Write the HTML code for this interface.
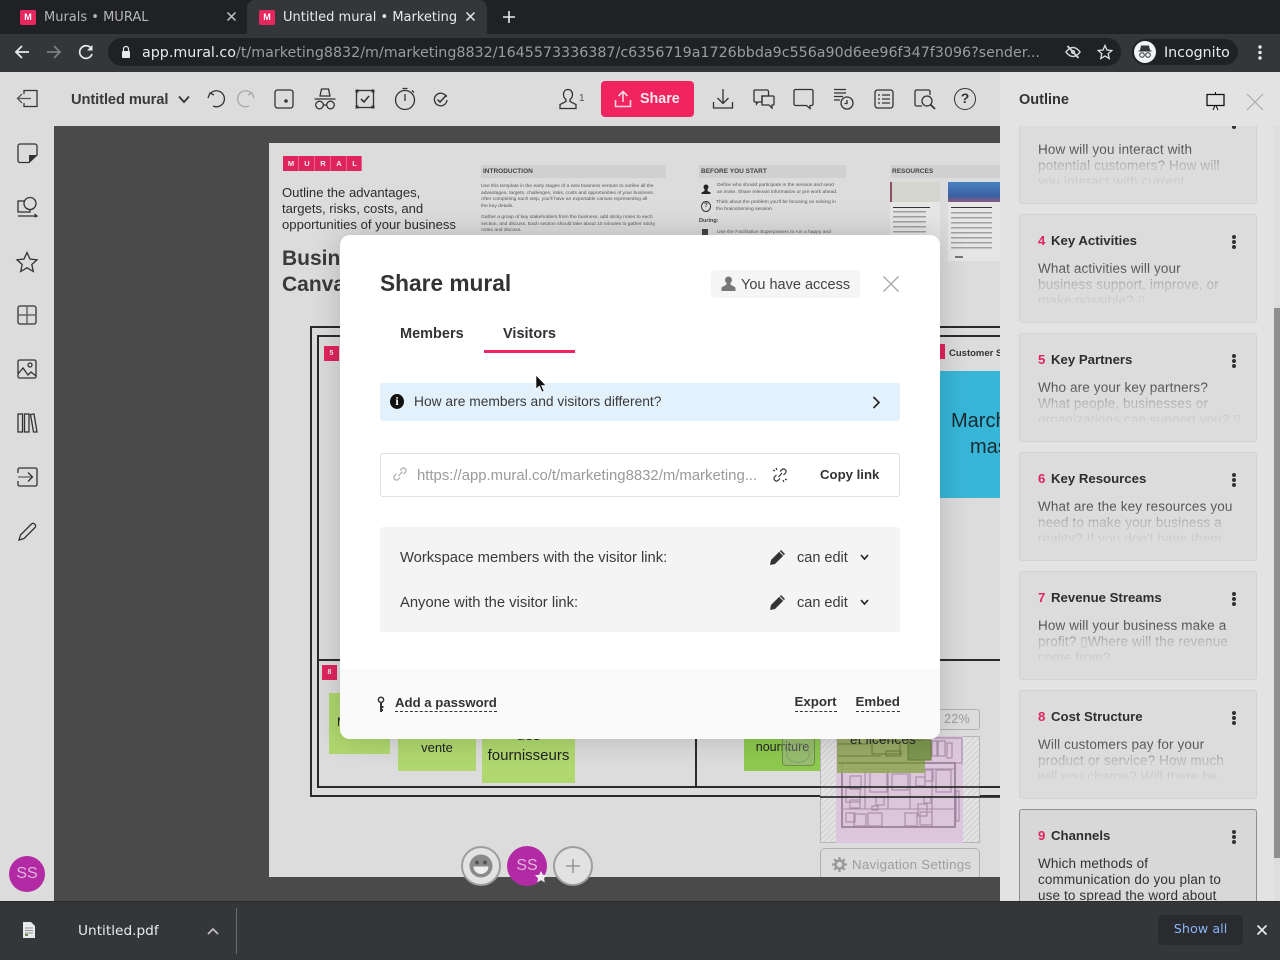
<!DOCTYPE html>
<html><head><meta charset="utf-8"><title>Untitled mural</title>
<style>
html,body{margin:0;padding:0;width:1280px;height:960px;overflow:hidden;background:#4a4a4a;font-family:"Liberation Sans",sans-serif;color:#333}
.a{position:absolute;white-space:nowrap}
svg{position:absolute;overflow:visible;fill:none}
.dj{font-family:"DejaVu Sans",sans-serif}
.card{position:absolute;left:1019px;width:236px;height:107px;background:#dcdcdc;border:1px solid #d2d2d2;border-radius:3px;overflow:hidden}
.card .n{position:absolute;left:18px;top:17px;font:bold 13.2px/18px "Liberation Sans",sans-serif;color:#e0245e}
.card .t{position:absolute;left:31px;top:17px;font:bold 13.2px/18px "Liberation Sans",sans-serif;color:#2e2e2e;white-space:nowrap}
.card .d{position:absolute;left:18px;top:46px;width:215px;height:42px;overflow:hidden;white-space:nowrap;font:13.5px/16px "Liberation Sans",sans-serif;color:#555;letter-spacing:.13px}
.card .f{position:absolute;left:0;right:0;top:46px;height:42px;background:linear-gradient(#dcdcdc00 0,#dcdcdc00 8px,#dcdcdcc0 24px,#dcdcdce8 42px)}
.card i{position:absolute;left:212px;width:3.6px;height:3.6px;border-radius:2px;background:#333}
.sticky{position:absolute;background:#b0d86f;color:#222;text-align:center;font-size:14px;line-height:19px}
.st{stroke:#333;stroke-width:1.3}
.logo b{position:absolute;top:0;width:16px;height:15px;background:#e0245e;color:#eee;font:bold 7.5px/15px "Liberation Sans";text-align:center;box-shadow:inset -1px 0 0 #e8618a}
.it{white-space:nowrap;font-size:4.9px;line-height:6.5px;color:#555}
</style></head><body>

<!-- tab strip -->
<div class="a" style="left:0;top:0;width:1280px;height:34px;background:#202124"></div>
<div class="a" style="left:247px;top:0;width:240px;height:34px;background:#35363a;border-radius:8px 8px 0 0"></div>
<div class="a" style="left:20px;top:10px;width:16px;height:15px;background:#e8265e;border-radius:2px;color:#fff;font:bold 9px/15px 'Liberation Sans';text-align:center">M</div>
<div class="a dj" style="left:44px;top:9px;font-size:13px;line-height:18px;color:#b4b5b8">Murals • MURAL</div>
<svg style="left:227px;top:12px" width="9" height="9"><path d="M.5.5l8 8M8.500.5l-8 8" stroke="#c4c5c8" stroke-width="1.500"/></svg>
<div class="a" style="left:259px;top:10px;width:16px;height:15px;background:#e8265e;border-radius:2px;color:#fff;font:bold 9px/15px 'Liberation Sans';text-align:center">M</div>
<div class="a dj" style="left:283px;top:9px;font-size:13px;line-height:18px;color:#e8eaed">Untitled mural • Marketing</div>
<svg style="left:466px;top:12px" width="9" height="9"><path d="M.5.5l8 8M8.500.5l-8 8" stroke="#e8eaed" stroke-width="1.500"/></svg>
<svg style="left:502px;top:10px" width="14" height="14"><path d="M7 1v12M1 7h12" stroke="#e8eaed" stroke-width="1.600"/></svg>

<!-- address bar -->
<div class="a" style="left:0;top:34px;width:1280px;height:38px;background:#35363a"></div>
<svg style="left:14px;top:44px" width="16" height="16"><path d="M15 8H2M8 2 2 8l6 6" stroke="#e8eaed" stroke-width="1.800"/></svg>
<svg style="left:46px;top:44px" width="16" height="16"><path d="M1 8h13M8 2l6 6-6 6" stroke="#7e8083" stroke-width="1.800"/></svg>
<svg style="left:78px;top:44px" width="16" height="16"><path d="M13.500 5A6.300 6.300 0 1 0 14 10" stroke="#e8eaed" stroke-width="1.700"/><path d="M14.500 1v5.500H9z" fill="#e8eaed"/></svg>
<div class="a" style="left:108px;top:38px;width:1013px;height:28px;background:#202124;border-radius:14px"></div>
<svg style="left:120px;top:45px" width="12" height="14"><rect x="2" y="6" width="8" height="7" rx="1" fill="#e8eaed"/><path d="M3.500 6V4a2.500 2.500 0 0 1 5 0v2" stroke="#e8eaed" stroke-width="1.200"/></svg>
<div class="a dj" style="left:142px;top:43px;width:905px;overflow:hidden;font-size:14.280px;line-height:20px;color:#9a9ca0"><span style="color:#e8eaed">app.mural.co</span>/t/marketing8832/m/marketing8832/1645573336387/c6356719a1726bbda9c556a90d6ee96f347f3096?sender...</div>
<svg style="left:1065px;top:44px" width="16" height="16"><path d="M1 8s3-4.500 7-4.500S15 8 15 8s-3 4.500-7 4.500S1 8 1 8z" stroke="#d4d5d7" stroke-width="1.500"/><circle cx="8" cy="8" r="2" fill="#d4d5d7"/><path d="M2.500 2 13.500 14" stroke="#d4d5d7" stroke-width="1.800"/></svg>
<svg style="left:1097px;top:44px" width="16" height="16"><path d="M8 1.500 10 6l4.800.5-3.600 3.200 1 4.800L8 12l-4.200 2.500 1-4.800L1.200 6.500 6 6z" stroke="#e0e1e3" stroke-width="1.300"/></svg>
<div class="a" style="left:1132px;top:39px;width:106px;height:26px;background:#202124;border-radius:13px"></div>
<div class="a" style="left:1134px;top:41px;width:22px;height:22px;background:#f1f3f4;border-radius:50%"></div>
<svg style="left:1137px;top:44px" width="16" height="16"><path d="M4.500 2h7l1 4h-9z M1.500 7h13" fill="#35363a" stroke="#35363a"/><circle cx="5" cy="11" r="2.300" stroke="#35363a"/><circle cx="11" cy="11" r="2.300" stroke="#35363a"/></svg>
<div class="a dj" style="left:1164px;top:43px;font-size:14.200px;line-height:20px;color:#e8eaed">Incognito</div>
<svg style="left:1258px;top:45px" width="4" height="16"><circle cx="2" cy="2" r="1.700" fill="#e8eaed"/><circle cx="2" cy="7.500" r="1.700" fill="#e8eaed"/><circle cx="2" cy="13" r="1.700" fill="#e8eaed"/></svg>

<!-- page under overlay -->
<div class="a" style="left:0;top:72px;width:1280px;height:829px;background:#4a4a4a"></div>

<!-- mural board -->
<div class="a" style="left:269px;top:143px;width:731px;height:734px;background:#dcdcdc;overflow:hidden">
  <div class="a logo" style="left:14px;top:13px;width:79px;height:15px">
    <b style="left:0">M</b><b style="left:16px">U</b><b style="left:32px">R</b><b style="left:48px">A</b><b style="left:64px;width:15px">L</b>
  </div>
  <div class="a" style="left:13px;top:42px;font-size:13.100px;line-height:16px;color:#2c2c2c">Outline the advantages,<br>targets, risks, costs, and<br>opportunities of your business</div>
  <div class="a" style="left:13px;top:103px;font:bold 21px/26px 'Liberation Sans';color:#3a3a3a">Business<br>Canvas</div>

  <div class="a" style="left:212px;top:22px;width:185px;height:13px;background:#d0d0d0;font:bold 6.500px/13px 'Liberation Sans';color:#444;text-indent:2px">INTRODUCTION</div>
  <div class="a it" style="left:212px;top:41px">Use this template in the early stages of a new business venture to outline all the<br>advantages, targets, challenges, risks, costs and opportunities of your business.<br>After completing each step, you'll have an exportable canvas representing all<br>the key details.</div>
  <div class="a it" style="left:212px;top:72px">Gather a group of key stakeholders from the business, add sticky notes to each<br>section, and discuss. Each section should take about 10 minutes to gather sticky<br>notes and discuss.</div>

  <div class="a" style="left:430px;top:22px;width:147px;height:13px;background:#d0d0d0;font:bold 6.500px/13px 'Liberation Sans';color:#444;text-indent:2px">BEFORE YOU START</div>
  <div class="a it" style="left:448px;top:39px;line-height:7px">Define who should participate in the session and send<br>an invite. Share relevant information or pre work ahead.</div>
  <svg style="left:432px;top:41px" width="10" height="11"><circle cx="5" cy="3" r="2.500" fill="#222"/><path d="M3.500 5h3v2l3 1.500V10H.5V8.500l3-1.500z" fill="#222"/></svg>
  <div class="a it" style="left:447px;top:55.500px;line-height:7px">Think about the problem you'll be focusing on solving in<br>the brainstorming session.</div>
  <div class="a" style="left:432px;top:58px;width:8px;height:9px;border:1.200px solid #333;border-radius:50%;font:bold 6px/9px 'Liberation Sans';text-align:center;color:#333">?</div>
  <div class="a" style="left:430px;top:75px;font-size:5.500px;line-height:7px;color:#444;font-weight:bold">During:</div>
  <div class="a it" style="left:448px;top:85.500px;line-height:7px">Use the Facilitation Superpowers to run a happy and</div>
  <div class="a" style="left:433px;top:86px;width:6px;height:8px;background:#444"></div>

  <div class="a" style="left:622px;top:22px;width:109px;height:13px;background:#d0d0d0;font:bold 6.500px/13px 'Liberation Sans';color:#444;text-indent:1px">RESOURCES</div>
  <div class="a" style="left:621px;top:39px;width:50px;height:84px;background:#e6e6e6"></div>
  <div class="a" style="left:621px;top:39px;width:50px;height:20px;background:#d4d5cc"></div>
  <div class="a" style="left:621px;top:39px;width:2px;height:20px;background:#8a5060"></div>
  <div class="a" style="left:624px;top:64px;width:37px;height:1px;background:#333"></div>
  <div class="a" style="left:624px;top:68px;width:33px;height:40px;background:repeating-linear-gradient(#a0a0a0 0 1.500px,transparent 1.500px 5px)"></div>
  <div class="a" style="left:679px;top:39px;width:52px;height:79px;background:#e6e6e6"></div>
  <div class="a" style="left:679px;top:39px;width:52px;height:20px;background:linear-gradient(#4a82c4,#3a5fa0 70%,#8a5a80)"></div>
  <div class="a" style="left:682px;top:64px;width:41px;height:1px;background:#333"></div>
  <div class="a" style="left:682px;top:69px;width:41px;height:37px;background:repeating-linear-gradient(#a0a0a0 0 1.500px,transparent 1.500px 5px)"></div>
  <div class="a" style="left:686px;top:113px;width:8px;height:1.500px;background:#777"></div>

  <!-- canvas frame -->
  <div class="a" style="left:41px;top:183px;width:720px;height:471px;border:2px solid #2a2a2a;box-sizing:border-box"></div>
  <div class="a" style="left:48px;top:192px;width:720px;height:453px;border:2px solid #2a2a2a;box-sizing:border-box"></div>
  <div class="a" style="left:48px;top:516px;width:690px;height:2px;background:#2a2a2a"></div>
  <div class="a" style="left:426px;top:516px;width:2px;height:128px;background:#2a2a2a"></div>
  <div class="a" style="left:55px;top:203px;width:15px;height:15px;background:#e0245e;color:#eee;font:bold 7px/15px 'Liberation Sans';text-align:center">5</div>
  <div class="a" style="left:53px;top:522px;width:15px;height:15px;background:#e0245e;color:#eee;font:bold 7px/15px 'Liberation Sans';text-align:center">8</div>
  <div class="a" style="left:663px;top:201px;width:13px;height:15px;background:#e0245e"></div>
  <div class="a" style="left:680px;top:202.500px;font:bold 9.500px/15px 'Liberation Sans';color:#333">Customer Segments</div>
  <div class="a" style="left:671px;top:228px;width:90px;height:127px;background:#38b6d8;color:#1a2a30;font-size:20px;line-height:26px;padding-left:11px;box-sizing:border-box;padding-top:37px">March<br><span style="margin-left:19px">mas</span></div>

  <!-- stickies -->
  <div class="sticky" style="left:60px;top:550px;width:61px;height:61px"></div>
  <div class="a" style="left:68px;top:572px;font-size:12px;color:#222">M</div>
  <div class="sticky" style="left:129px;top:575px;width:78px;height:53px;padding-top:20px;box-sizing:border-box;font-size:13px">vente</div>
  <div class="sticky" style="left:213px;top:570px;width:93px;height:70px;padding-top:13px;box-sizing:border-box;font-size:15px;line-height:20px">des<br>fournisseurs</div>
  <div class="sticky" style="left:475px;top:575px;width:77px;height:53px;padding-top:20px;box-sizing:border-box;background:#8ec94f;font-size:12.500px;white-space:nowrap">nourriture</div>
  <div class="a" style="left:513px;top:587px;width:33px;height:36px;box-sizing:border-box;border:1px solid #6e8f4a;border-radius:4px;background:rgba(170,170,170,.35)"></div>
  <div class="a" style="left:517px;top:600px;width:24px;height:20px;box-sizing:border-box;border:1px solid #8aa070;border-radius:50%"></div>

  <!-- minimap -->
  <div class="a" style="left:551px;top:593px;width:160px;height:107px;box-sizing:border-box;border:1px solid #b5b5b5;background:repeating-linear-gradient(135deg,#cfcfcf 0 1px,#e2e2e2 1px 4px)"></div>
  <div class="a" style="left:567px;top:593px;width:127px;height:107px;background:#dcc6dc"></div>
  <svg style="left:551px;top:593px" width="160" height="107">
    <g stroke="#a78ca7" stroke-width="1.100">
      <rect x="18" y="2" width="124" height="25"/>
      <rect x="22" y="27" width="113" height="64" stroke-width="1.600" stroke="#957995"/>
      <path d="M22 33h113M45 33v40M68 33v40M90 33v40M112 33v58M22 73h113"/>
      <rect x="30" y="40" width="11" height="13"/><rect x="26" y="52" width="14" height="14"/><rect x="30" y="64" width="10" height="8"/>
      <rect x="50" y="36" width="17" height="20"/><rect x="72" y="38" width="16" height="16"/><rect x="96" y="41" width="9" height="9"/><rect x="105" y="34" width="8" height="11"/><rect x="116" y="34" width="15" height="22"/>
      <rect x="56" y="61" width="8" height="8"/><rect x="52" y="70" width="6" height="4"/><rect x="98" y="68" width="9" height="12"/><rect x="104" y="61" width="7" height="6"/>
      <rect x="26" y="77" width="9" height="9"/><rect x="34" y="78" width="12" height="12"/><rect x="48" y="77" width="14" height="13"/><rect x="85" y="77" width="12" height="13"/><rect x="100" y="76" width="12" height="13"/>
      <rect x="136" y="55" width="3" height="30"/><rect x="112" y="5" width="5" height="15"/><rect x="118" y="5" width="7" height="15"/><rect x="127" y="7" width="5" height="15"/>
    </g>
  </svg>
  <div class="a" style="left:568px;top:593px;width:88px;height:37px;background:#8fa958;opacity:.88"></div>
  <svg style="left:551px;top:593px" width="160" height="40">
    <g stroke="#6c7f3c" stroke-width="1.100"><path d="M18 20h43M18 27h88M18 8h30"/><rect x="52" y="5" width="28" height="13"/><rect x="66" y="15" width="15" height="5"/><rect x="88" y="4" width="23" height="20" fill="#7d9650"/></g>
  </svg>
  <div class="a" style="left:581px;top:589px;font-size:13.500px;line-height:16px;color:#2a2a2a;letter-spacing:.2px">et licences</div>
  <div class="a" style="left:551px;top:643px;width:180px;height:2px;background:#2a2a2a;opacity:.85"></div>
  <div class="a" style="left:551px;top:653px;width:180px;height:2px;background:#2a2a2a;opacity:.85"></div>

  <div class="a" style="left:661px;top:566px;width:50px;height:21px;box-sizing:border-box;border:1px solid #b0b0b0;border-radius:3px;font-size:12.500px;line-height:19px;color:#9a9a9a;text-align:right;padding-right:9px;letter-spacing:.3px">22%</div>
  <div class="a" style="left:551px;top:705px;width:160px;height:32px;box-sizing:border-box;border:1px solid #b0b0b0;border-radius:5px;font-size:13.300px;line-height:31px;color:#9e9e9e;padding-left:31px;letter-spacing:.25px">Navigation Settings</div>
  <svg style="left:563px;top:714px" width="15" height="15"><circle cx="7.500" cy="7.500" r="4" stroke="#9a9a9a" stroke-width="2.600"/><path d="M7.500 0v3M7.500 12v3M0 7.500h3M12 7.500h3M2.200 2.200l2 2M10.800 10.800l2 2M12.800 2.200l-2 2M4.200 10.800l-2 2" stroke="#9a9a9a" stroke-width="2.200"/></svg>
</div>

<!-- top toolbar -->
<div class="a" style="left:0;top:72px;width:1000px;height:54px;background:#dcdcdc"></div>
<div class="a" style="left:0;top:72px;width:54px;height:829px;background:#dcdcdc"></div>
<div class="a" style="left:71px;top:90px;font:bold 14.700px/20px 'Liberation Sans';color:#3a3a3a;letter-spacing:-.1px">Untitled mural</div>
<svg style="left:178px;top:95px" width="12" height="9"><path d="M1 1.500 6 7l5-5.500" stroke="#333" stroke-width="1.800"/></svg>
<svg style="left:206px;top:89px" width="20" height="20"><path d="M4 5a8 8 0 1 1 3 12" class="st"/><path d="M2 9l2-5 4 2" class="st"/></svg>
<svg style="left:236px;top:89px" width="20" height="20" opacity=".3"><path d="M16 5a8 8 0 1 0-3 12" class="st" stroke="#777"/><path d="M18 9l-2-5-4 2" class="st"/></svg>
<svg style="left:274px;top:89px" width="20" height="20"><rect x="1" y="1" width="18" height="18" rx="2.500" class="st"/><circle cx="12" cy="12" r="1.800" fill="#333"/></svg>
<svg style="left:313px;top:87px" width="24" height="24"><path d="M7 9l1.500-7h7L17 9zM1.500 12h21" class="st"/><circle cx="6.500" cy="18" r="3.800" class="st"/><circle cx="17.500" cy="18" r="3.800" class="st"/><path d="M10.300 18h3.400" class="st"/></svg>
<svg style="left:355px;top:89px" width="20" height="20"><rect x="1.500" y="1.500" width="17" height="17" class="st"/><path d="M1 1h2v2H1zM17 1h2v2h-2zM1 17h2v2H1zM17 17h2v2h-2z" fill="#333" stroke="#333"/><path d="M6 10l3 3 5-6" stroke="#333" stroke-width="1.600"/></svg>
<svg style="left:394px;top:87px" width="22" height="24"><circle cx="11" cy="13" r="9.500" class="st"/><path d="M11 7v7M8.500 1.500h5M18 3.500l2 2" class="st"/></svg>
<svg style="left:433px;top:92px" width="15" height="15"><path d="M13.500 5A6.300 6.300 0 1 0 14 8" class="st"/><path d="M4.500 7.500l2.500 2.500 6.500-7" stroke="#333" stroke-width="1.500"/></svg>
<svg style="left:558px;top:88px" width="20" height="22"><path d="M10 1.500c-3 0-4.500 2.200-4.500 5 0 2.200 1.200 4 2.500 5v2L2 16.500v4h16v-4l-6-3v-2c1.300-1 2.500-2.800 2.500-5 0-2.800-1.500-5-4.500-5z" class="st"/></svg>
<div class="a" style="left:579px;top:93px;font-size:10px;line-height:12px;color:#555">1</div>
<div class="a" style="left:601px;top:81px;width:93px;height:36px;border-radius:4px;background:#f0245e"></div>
<svg style="left:614px;top:90px" width="18" height="18"><path d="M9 12V2M4.500 6 9 1.500 13.500 6M1.500 10v6.500h15V10" stroke="#f5d5e0" stroke-width="1.600"/></svg>
<div class="a" style="left:640px;top:89px;font:bold 14.300px/20px 'Liberation Sans';color:#f8e8ee">Share</div>
<svg style="left:712px;top:87px" width="22" height="22"><path d="M11 2v14M5.500 11 11 16.500 16.500 11M1.500 15v6h19v-6" class="st"/></svg>
<svg style="left:753px;top:88px" width="22" height="22"><path d="M2 2h12a1.500 1.500 0 0 1 1.500 1.500V8H9v6H5l-1.500 2V14H2a1 1 0 0 1-1-1V3a1 1 0 0 1 1-1z" class="st"/><path d="M9 8h11a1 1 0 0 1 1 1v7a1 1 0 0 1-1 1h-1v3l-3-3H9z" class="st"/></svg>
<svg style="left:793px;top:88px" width="21" height="22"><path d="M2.500 1.500h16a1.500 1.500 0 0 1 1.500 1.500v13a1.500 1.500 0 0 1-1.500 1.500H17v3l-3.500-3h-11A1.500 1.500 0 0 1 1 16V3a1.500 1.500 0 0 1 1.500-1.500z" class="st"/></svg>
<svg style="left:833px;top:88px" width="22" height="22"><path d="M1 1.500h12M1 5h12M1 8.500h9M1 12h6" stroke="#333" stroke-width="1.300"/><circle cx="14" cy="15" r="6" class="st"/><path d="M14 12v3.500h-2.500" class="st"/></svg>
<svg style="left:874px;top:89px" width="20" height="20"><rect x="1" y="1" width="18" height="18" rx="2.500" class="st"/><path d="M8 6h8M8 10h8M8 14h8M4 6h2M4 10h2M4 14h2" class="st"/></svg>
<svg style="left:914px;top:88px" width="22" height="22"><path d="M8 18H2.500A1.500 1.500 0 0 1 1 16.500v-13A1.500 1.500 0 0 1 2.500 2h12A1.500 1.500 0 0 1 16 3.500V7" class="st"/><circle cx="13" cy="13" r="5" class="st"/><path d="M16.500 16.500 21 21" stroke="#333" stroke-width="1.800"/></svg>
<div class="a" style="left:954px;top:88px;width:22px;height:22px;box-sizing:border-box;border:1.500px solid #333;border-radius:50%;font:bold 14px/19px 'Liberation Sans';text-align:center;color:#333">?</div>

<!-- left sidebar -->
<svg style="left:16px;top:89px" width="22" height="20"><path d="M8 5V1.500h13v16H8V14" class="st"/><path d="M15 9.500H2M6 5 1.500 9.500 6 14" stroke="#555" stroke-width="1.300"/></svg>
<svg style="left:17px;top:143px" width="21" height="21"><path d="M12 19.500H3A2 2 0 0 1 1 17.500V3A2 2 0 0 1 3 1h15a2 2 0 0 1 2 2v9z" class="st"/><path d="M12 19.500V12h8z" fill="#333"/></svg>
<svg style="left:17px;top:196px" width="22" height="22"><rect x="1" y="5" width="12" height="11" class="st"/><circle cx="13" cy="7.500" r="6" class="st" fill="#dcdcdc"/><path d="M1 20h19M17.500 18l2.500 2-2.500 1" class="st"/></svg>
<svg style="left:16px;top:251px" width="22" height="22"><path d="M11 1.500 14 8l7 .8-5.200 4.700 1.500 7L11 16.800 4.700 20.500l1.500-7L1 8.800 8 8z" class="st"/></svg>
<svg style="left:17px;top:305px" width="20" height="20"><rect x="1" y="1" width="18" height="18" rx="2" class="st"/><path d="M10 1v18M1 10h18" stroke="#666" stroke-width="1.500"/></svg>
<svg style="left:17px;top:359px" width="20" height="20"><rect x="1" y="1" width="18" height="18" rx="1.500" class="st"/><circle cx="13" cy="6" r="2" class="st"/><path d="M1 15l5-6 5 7 3-3 5 4" class="st"/></svg>
<svg style="left:17px;top:413px" width="21" height="20"><rect x="1" y="1" width="4.500" height="18" class="st"/><rect x="7.500" y="1" width="4.500" height="18" class="st"/><path d="M13.500 1.500 17 1l3 18h-3.500z" class="st"/></svg>
<svg style="left:17px;top:467px" width="21" height="20"><path d="M1 6V2.500A1.500 1.500 0 0 1 2.500 1h16A1.500 1.500 0 0 1 20 2.500v15a1.500 1.500 0 0 1-1.500 1.500h-16A1.500 1.500 0 0 1 1 17.500V14" class="st"/><path d="M1 10h14" stroke="#666" stroke-width="1.300"/><path d="M11 5.500l4.500 4.500-4.500 4.500" class="st"/></svg>
<svg style="left:18px;top:522px" width="19" height="19"><path d="M1 18l1.500-5L13.500 2a2 2 0 0 1 3 0l.5.500a2 2 0 0 1 0 3L6 16.500z" class="st"/></svg>
<div class="a" style="left:9px;top:856px;width:36px;height:36px;border-radius:50%;background:#b22aa4;color:#e0b5db;font-size:16px;line-height:36px;text-align:center">SS</div>

<!-- bottom avatars (overflow the board) -->
<div class="a" style="left:461px;top:846px;width:40px;height:40px;box-sizing:border-box;border:2px solid #9e9e9e;border-radius:50%;background:#e2e2e2"></div>
<svg style="left:469px;top:854px" width="24" height="24"><circle cx="12" cy="12" r="11.500" fill="#8a8a8a"/><circle cx="8" cy="8.500" r="2" fill="#555"/><circle cx="16" cy="8.500" r="2" fill="#555"/><path d="M4.500 12.500h15a7.500 7.500 0 0 1-15 0z" fill="#eee"/></svg>
<div class="a" style="left:507px;top:846px;width:40px;height:40px;border-radius:50%;background:#b22aa4;color:#e0b5db;font-size:16px;line-height:40px;text-align:center">SS</div>
<svg style="left:534px;top:870px" width="14" height="14"><path d="M7 1l1.800 3.800 4.200.5-3 2.900.8 4.200L7 10.300l-3.800 2.100.8-4.200-3-2.900 4.200-.5z" fill="#eee"/></svg>
<div class="a" style="left:553px;top:846px;width:40px;height:40px;box-sizing:border-box;border:2px solid #9e9e9e;border-radius:50%;background:#e2e2e2"></div>
<svg style="left:565px;top:858px" width="16" height="16"><path d="M8 1v14M1 8h14" stroke="#8a8a8a" stroke-width="1.300"/></svg>

<!-- outline panel -->
<div class="a" style="left:1000px;top:72px;width:280px;height:829px;background:#e3e3e3;overflow:hidden"></div>
<div class="a" style="left:1019px;top:90px;font:bold 14.500px/20px 'Liberation Sans';color:#333">Outline</div>
<svg style="left:1206px;top:92px" width="19" height="18"><path d="M1 2.500h17v11H1z" stroke="#111" stroke-width="1.300"/><path d="M9.500 0v2.500M9 13.500 7 18M10 13.500l2 4.500" stroke="#111" stroke-width="1"/></svg>
<svg style="left:1246px;top:93px" width="18" height="18"><path d="M1 1l16 16M17 1 1 17" stroke="#a8a8a8" stroke-width="1"/></svg>

<div class="a" style="left:1000px;top:126px;width:272px;height:775px;overflow:hidden">
  <div style="position:absolute;left:-1000px;top:-126px;width:1280px;height:960px">
    <div class="card" style="top:95px"><i style="top:29px"></i><div class="d">How will you interact with<br>potential customers? How will<br>you interact with current</div><div class="f"></div></div>
    <div class="card" style="top:214px"><div class="n">4</div><div class="t">Key Activities</div><i style="top:20px"></i><i style="top:25px"></i><i style="top:30px"></i><div class="d">What activities will your<br>business support, improve, or<br>make possible? ▯</div><div class="f"></div></div>
    <div class="card" style="top:333px"><div class="n">5</div><div class="t">Key Partners</div><i style="top:20px"></i><i style="top:25px"></i><i style="top:30px"></i><div class="d">Who are your key partners?<br>What people, businesses or<br>organizations can support you? ▯</div><div class="f"></div></div>
    <div class="card" style="top:452px"><div class="n">6</div><div class="t">Key Resources</div><i style="top:20px"></i><i style="top:25px"></i><i style="top:30px"></i><div class="d">What are the key resources you<br>need to make your business a<br>reality? If you don't have them</div><div class="f"></div></div>
    <div class="card" style="top:571px"><div class="n">7</div><div class="t">Revenue Streams</div><i style="top:20px"></i><i style="top:25px"></i><i style="top:30px"></i><div class="d">How will your business make a<br>profit? ▯Where will the revenue<br>come from?</div><div class="f"></div></div>
    <div class="card" style="top:690px"><div class="n">8</div><div class="t">Cost Structure</div><i style="top:20px"></i><i style="top:25px"></i><i style="top:30px"></i><div class="d">Will customers pay for your<br>product or service? How much<br>will you charge? Will there be</div><div class="f"></div></div>
    <div class="card" style="top:809px;background:#d8d8d8;border-color:#8f8f8f"><div class="n">9</div><div class="t">Channels</div><i style="top:20px"></i><i style="top:25px"></i><i style="top:30px"></i><div class="d" style="color:#333;height:60px">Which methods of<br>communication do you plan to<br>use to spread the word about</div></div>
  </div>
</div>
<div class="a" style="left:1274px;top:126px;width:6px;height:775px;background:#dedede"></div>
<div class="a" style="left:1274px;top:308px;width:6px;height:550px;background:#8f8f8f"></div>

<!-- modal -->
<div class="a" style="left:340px;top:235px;width:600px;height:504px;background:#fff;border-radius:10px;overflow:hidden;box-shadow:0 0 30px rgba(0,0,0,.18)">
  <div class="a" style="left:0;top:434px;width:600px;height:70px;background:#fafafa"></div>
</div>
<div class="a" style="left:380px;top:269px;font:bold 22.700px/28px 'Liberation Sans';color:#333">Share mural</div>
<div class="a" style="left:711px;top:270px;width:149px;height:28px;background:#f5f5f5;border-radius:4px"></div>
<svg style="left:721px;top:276px" width="15" height="15"><circle cx="7.500" cy="4" r="3.500" fill="#777"/><path d="M5.500 7h4v1.500l5 3V15H.5v-3.500l5-3z" fill="#777"/></svg>
<div class="a" style="left:741px;top:275.500px;font-size:14.500px;line-height:18px;color:#444">You have access</div>
<svg style="left:883px;top:276px" width="16" height="16"><path d="M.5.5l15 15M15.500.5l-15 15" stroke="#a4a4a4" stroke-width="1.300"/></svg>
<div class="a" style="left:400px;top:323.500px;font:bold 14.500px/20px 'Liberation Sans';color:#333">Members</div>
<div class="a" style="left:503px;top:323.500px;font:bold 14.500px/20px 'Liberation Sans';color:#333">Visitors</div>
<div class="a" style="left:484px;top:350px;width:91px;height:3px;background:#f0245e"></div>

<div class="a" style="left:380px;top:383px;width:520px;height:38px;background:#e3f1fd;border-radius:3px"></div>
<div class="a" style="left:390px;top:394px;width:14px;height:15px;border-radius:50%;background:#111;color:#fff;font:bold 12px/15px 'Liberation Serif';text-align:center">i</div>
<div class="a" style="left:414px;top:393px;font-size:13.800px;line-height:17px;color:#3a3a3a">How are members and visitors different?</div>
<svg style="left:872px;top:396px" width="9" height="13"><path d="M1.500 1 7 6.500 1.500 12" stroke="#222" stroke-width="1.600"/></svg>

<div class="a" style="left:380px;top:453px;width:520px;height:44px;box-sizing:border-box;border:1px solid #e0e0e0;border-radius:3px;background:#fff"></div>
<svg style="left:392px;top:466px" width="16" height="16"><path d="M6.500 10 10.500 5.500M4.500 8 2.500 10a2.500 2.500 0 0 0 3.500 3.500l2-2M8 4.500l2-2A2.500 2.500 0 0 1 13.500 6l-2 2" stroke="#aaa" stroke-width="1.200"/></svg>
<div class="a" style="left:417px;top:467px;font-size:14.900px;line-height:19px;color:#9a9a9a;width:345px;overflow:hidden">https://app.mural.co/t/marketing8832/m/marketing...</div>
<svg style="left:772px;top:467px" width="16" height="16"><path d="M6.500 10 10 6M4.500 8 2.500 10a2.500 2.500 0 0 0 3.500 3.500l2-2M8 4.500l2-2A2.500 2.500 0 0 1 13.500 6l-2 2M1 3l2 1M4 1l1 2M15 13l-2-1M12 15l-1-2" stroke="#333" stroke-width="1.200"/></svg>
<div class="a" style="left:820px;top:465px;font:bold 13.200px/19px 'Liberation Sans';color:#333">Copy link</div>

<div class="a" style="left:380px;top:527px;width:520px;height:105px;background:#f4f4f4;border-radius:3px"></div>
<div class="a" style="left:400px;top:548px;font-size:14.780px;line-height:20px;color:#3a3a3a">Workspace members with the visitor link:</div>
<div class="a" style="left:400px;top:593px;font-size:14.780px;line-height:20px;color:#3a3a3a">Anyone with the visitor link:</div>
<svg style="left:770px;top:549px" width="16" height="16"><path d="M0 16l1-5L11 1l4 4L5 15z" fill="#333"/><path d="M9.500 2.500l4 4" stroke="#f4f4f4"/></svg>
<svg style="left:770px;top:594px" width="16" height="16"><path d="M0 16l1-5L11 1l4 4L5 15z" fill="#333"/><path d="M9.500 2.500l4 4" stroke="#f4f4f4"/></svg>
<div class="a" style="left:797px;top:548px;font-size:14.500px;line-height:20px;color:#3a3a3a">can edit</div>
<div class="a" style="left:797px;top:593px;font-size:14.500px;line-height:20px;color:#3a3a3a">can edit</div>
<svg style="left:860px;top:554px" width="9" height="7"><path d="M1 1l3.500 4L8 1" stroke="#222" stroke-width="1.600"/></svg>
<svg style="left:860px;top:599px" width="9" height="7"><path d="M1 1l3.500 4L8 1" stroke="#222" stroke-width="1.600"/></svg>

<svg style="left:376px;top:696px" width="10" height="17"><circle cx="5" cy="3.800" r="2.600" stroke="#333" stroke-width="1.500"/><path d="M5 6.500v9.500M5 11h2.500M5 14h2" stroke="#333" stroke-width="2"/></svg>
<div class="a" style="left:395px;top:694px;font:bold 13.200px/18px 'Liberation Sans';color:#333;border-bottom:1px dashed #333;height:17px">Add a password</div>
<div class="a" style="left:794.500px;top:693px;font:bold 13.300px/18px 'Liberation Sans';color:#333;border-bottom:1px dashed #333;height:18px">Export</div>
<div class="a" style="left:855.500px;top:693px;font:bold 13.300px/18px 'Liberation Sans';color:#333;border-bottom:1px dashed #333;height:18px">Embed</div>

<!-- cursor -->
<svg style="left:535px;top:375px" width="12" height="18"><path d="M1 0v14l3.500-3 2.500 6 2-1-2.500-5.500H11z" fill="#111" stroke="#fff" stroke-width=".6"/></svg>

<!-- download bar -->
<div class="a" style="left:0;top:901px;width:1280px;height:59px;background:#35363a;border-top:1px solid #2a2b2e;box-sizing:border-box"></div>
<svg style="left:22px;top:922px" width="13" height="16"><path d="M1 0h8l4 4v12H1z" fill="#e8eaed"/><path d="M3 6h8M3 8.500h8M3 11h8" stroke="#777" stroke-width=".8"/><rect x="3" y="12" width="3" height="2" fill="#6a8a50"/></svg>
<div class="a dj" style="left:78px;top:922px;font-size:13.700px;line-height:18px;color:#e8eaed">Untitled.pdf</div>
<svg style="left:207px;top:927px" width="12" height="8"><path d="M1 7l5-5 5 5" stroke="#bdbec1" stroke-width="1.800"/></svg>
<div class="a" style="left:236px;top:908px;width:1px;height:46px;background:#6a6b6e"></div>
<div class="a dj" style="left:1158px;top:915px;width:85px;height:30px;background:#292b2f;border-radius:4px;font-size:12.800px;line-height:30px;color:#8ab4f8;text-align:center">Show all</div>
<svg style="left:1257px;top:925px" width="10" height="10"><path d="M.5.500l9 9M9.500.500l-9 9" stroke="#e8eaed" stroke-width="1.700"/></svg>

</body></html>
